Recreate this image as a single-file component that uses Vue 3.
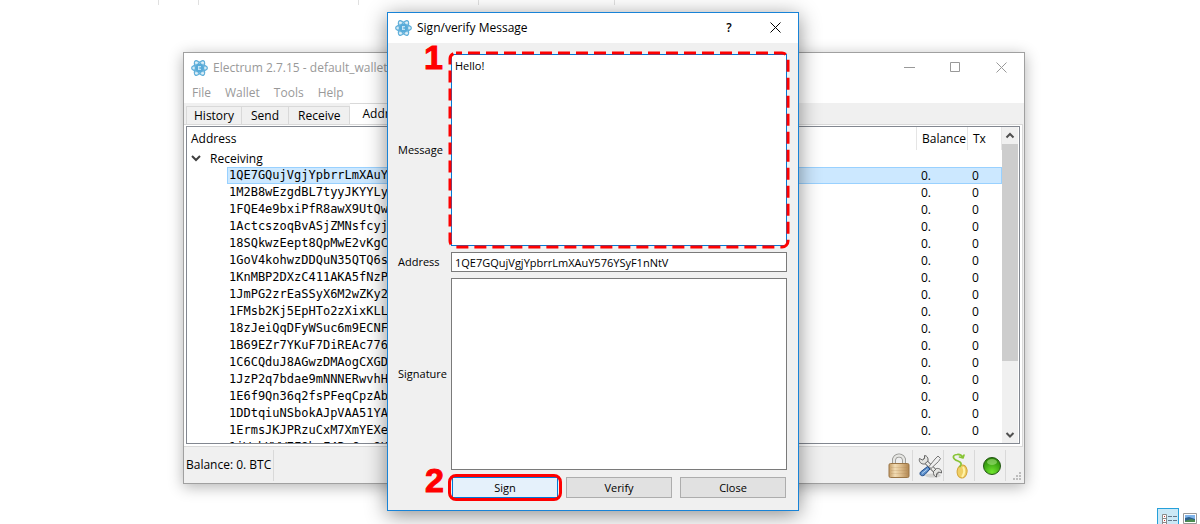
<script setup>
import { ref } from 'vue'

const menus = ['File', 'Wallet', 'Tools', 'Help']
const tabs = ['History', 'Send', 'Receive', 'Addresses']
const activeTab = ref('Addresses')
const addresses = [
  '1QE7GQujVgjYpbrrLmXAuY576YSyF1nNtV',
  '1M2B8wEzgdBL7tyyJKYYLyH',
  '1FQE4e9bxiPfR8awX9UtQwE',
  '1ActcszoqBvASjZMNsfcyjc',
  '18SQkwzEept8QpMwE2vKgCe',
  '1GoV4kohwzDDQuN35QTQ6sc',
  '1KnMBP2DXzC411AKA5fNzPx',
  '1JmPG2zrEaSSyX6M2wZKy2a',
  '1FMsb2Kj5EpHTo2zXixKLL9',
  '18zJeiQqDFyWSuc6m9ECNFF',
  '1B69EZr7YKuF7DiREAc776y',
  '1C6CQduJ8AGwzDMAogCXGDj',
  '1JzP2q7bdae9mNNNERwvhHg',
  '1E6f9Qn36q2fsPFeqCpzAbf',
  '1DDtqiuNSbokAJpVAA51YAE',
  '1ErmsJKJPRzuCxM7XmYEXeA',
  '1iWehKWW7F8hxF4PsCan9U'
]
const selected = ref(0)
const message = ref('Hello!')
const address = ref('1QE7GQujVgjYpbrrLmXAuY576YSyF1nNtV')
const signature = ref('')
const separators = [158, 198, 358, 478, 614]
</script>

<template>
  <div class="desktop">
    <i v-for="x in separators" :key="x" class="column-line" :style="{ left: x + 'px' }"></i>

    <div class="views">
      <button class="view on" aria-label="Details view">
        <svg width="20" height="15" viewBox="0 0 20 15">
          <path d="M4.500 5.500h4v12h-4zM4.500 9.500h4M4.500 13.500h4" fill="#fff" stroke="#8a8a8a" />
          <path d="M6 7h1v1H6zM6 11h1v1H6z" fill="#c33" />
          <path d="M10 7.500h4M15 7.500h4M10 11.500h4M15 11.500h4" stroke="#64788a" />
        </svg>
      </button>
      <button class="view" aria-label="Picture view">
        <svg width="14" height="11" viewBox="0 0 14 11">
          <path d="M.5.5h13v10H.5z" fill="#fff" stroke="#9a9a9a" />
          <path d="M2 2h10v4H2z" fill="#7fb4ea" />
          <path d="M2 5l4-1 6 2v3H2z" fill="#2d5f8c" />
          <path d="M2 8l6-2 4 1v2H2z" fill="#4c8b4f" />
        </svg>
      </button>
    </div>

    <section class="window main">
      <header class="titlebar">
        <svg class="logo" width="17" height="16" viewBox="0 0 17 16">
          <circle cx="8.500" cy="8" r="6.500" fill="#cfe8f5" />
          <g fill="none" stroke="#62b0da" stroke-width="1.400">
            <ellipse cx="8.500" cy="8" rx="7.800" ry="3.400" />
            <ellipse cx="8.500" cy="8" rx="8.200" ry="3.400" transform="rotate(60 8.500 8)" />
            <ellipse cx="8.500" cy="8" rx="8.200" ry="3.400" transform="rotate(120 8.500 8)" />
          </g>
          <circle cx="8.500" cy="8" r="4" fill="#58abd9" />
          <path d="M7.500 6.500h2.500M7.500 8h2M7.500 9.500h2.500M7.500 6v4" fill="none" stroke="#d8effa" stroke-width=".8" />
        </svg>
        <h1 class="title">Electrum 2.7.15 - default_wallet</h1>
        <div class="controls">
          <button aria-label="Minimize"><svg width="11" height="11"><path d="M0 5.500h11" /></svg></button>
          <button aria-label="Maximize"><svg width="11" height="11"><path d="M.5.5h9v9h-9z" /></svg></button>
          <button aria-label="Close window"><svg width="11" height="11"><path d="M.5.5l10 10M10.500.5l-10 10" /></svg></button>
        </div>
      </header>
      <nav class="menubar">
        <button v-for="m in menus" :key="m">{{ m }}</button>
      </nav>
      <div class="tabs" role="tablist">
        <button
          v-for="t in tabs"
          :key="t"
          role="tab"
          :class="{ active: t === activeTab }"
          :aria-selected="t === activeTab"
          @click="activeTab = t"
        >{{ t }}</button>
      </div>
      <div class="pane">
        <div class="tree">
          <div class="viewport">
            <table>
              <colgroup><col /><col class="c-balance" /><col class="c-tx" /></colgroup>
              <thead>
                <tr><th>Address</th><th>Balance</th><th>Tx</th></tr>
              </thead>
              <tbody>
                <tr class="group">
                  <td colspan="3">
                    <svg width="10" height="7" viewBox="0 0 10 7"><path d="M1 1l4 4 4-4" fill="none" stroke="#404040" stroke-width="2" /></svg>
                    Receiving
                  </td>
                </tr>
                <tr
                  v-for="(a, i) in addresses"
                  :key="a"
                  :class="{ selected: i === selected }"
                  @click="selected = i"
                >
                  <td class="addr"><div>{{ a }}</div></td>
                  <td class="num">0.</td>
                  <td class="num">0</td>
                </tr>
              </tbody>
            </table>
          </div>
          <div class="scrollbar">
            <svg width="16" height="17" viewBox="0 0 16 17"><path d="M4.500 10.500L8 7l3.500 3.500" /></svg>
            <div class="track"><div class="thumb"></div></div>
            <svg width="16" height="17" viewBox="0 0 16 17"><path d="M4.500 7L8 10.500 11.500 7" /></svg>
          </div>
        </div>
      </div>
      <footer class="status">
        <span class="balance">Balance: 0. BTC</span>
        <button class="cell" aria-label="Password">
          <svg width="24" height="28" viewBox="0 0 24 28">
            <defs>
              <linearGradient id="brass" x1="0" x2="1" y1="0" y2="0">
                <stop offset="0" stop-color="#c39a63" /><stop offset=".3" stop-color="#f2dcb4" />
                <stop offset=".6" stop-color="#dcbb8a" /><stop offset="1" stop-color="#b08550" />
              </linearGradient>
            </defs>
            <path d="M7 13V8.500a5 5 0 0 1 10 0V13" fill="none" stroke="#8d8d8a" stroke-width="4" />
            <path d="M7 13V8.500a5 5 0 0 1 10 0V13" fill="none" stroke="#e6e6e3" stroke-width="2.400" />
            <rect x="2" y="11.500" width="20" height="14" rx="1.500" fill="url(#brass)" stroke="#9a7546" />
            <path d="M4 15.500h16M4 18.500h16M4 21.500h16" stroke="#a98353" opacity=".2" />
          </svg>
        </button>
        <button class="cell" aria-label="Preferences">
          <svg width="24" height="24" viewBox="0 0 24 24">
            <ellipse cx="15" cy="21.500" rx="8" ry="2" fill="#d2d2d0" />
            <g fill="none" stroke-linecap="round">
              <path d="M6.500 6.500l12 12" stroke="#666" stroke-width="4.500" />
              <path d="M6.500 6.500l12 12" stroke="#e9e9e6" stroke-width="2.500" />
            </g>
            <path d="M6.500 1.500v3l-2 1.500-3-1.500c-1 3 1.500 6 5 5.500l3.500-3C10.500 4 9 1.500 6.500 1.500zM18.500 23v-3l2-2 3 1c.5-3-2-5-5-4.500l-3 3c-.5 3 1 5 3 5.500z" fill="#e4e4e1" stroke="#666" />
            <path d="M20 2l2.500 2.500-2 3-7.500 7-2-2 6-7.500z" fill="#eee" stroke="#777" />
            <path d="M9.500 12.500l2.500 2.500-5 5.500c-2 2.500-6.500 1-4.500-2.500z" fill="#5b8ec9" stroke="#204a87" />
            <path d="M9.500 15l-5.500 4.500" stroke="#b5d2f2" />
          </svg>
        </button>
        <button class="cell" aria-label="Seed">
          <svg width="20" height="26" viewBox="0 0 20 26">
            <ellipse cx="11" cy="18.500" rx="5" ry="6.500" fill="#efcf65" stroke="#d3a437" transform="rotate(8 11 19)" />
            <path d="M12 14c2 3 1 7-1 10" fill="none" stroke="#fff2a7" stroke-width="2" />
            <path d="M9 13.500C11 11 10.500 9.500 7 8 1 6 1 2 6 1.500c3-.4 5 1 6 3M8.500 4l3.500 1 1-3" fill="none" stroke="#87c435" stroke-width="1.700" stroke-linecap="round" stroke-linejoin="round" />
          </svg>
        </button>
        <button class="cell" aria-label="Network">
          <svg width="20" height="20" viewBox="0 0 20 20">
            <defs>
              <radialGradient id="led" cx=".5" cy=".85" r=".85">
                <stop offset="0" stop-color="#70e52e" /><stop offset=".6" stop-color="#3fa914" /><stop offset="1" stop-color="#2a8207" />
              </radialGradient>
            </defs>
            <circle cx="10" cy="10" r="8.500" fill="url(#led)" stroke="#245715" />
            <ellipse cx="10" cy="6" rx="5" ry="3" fill="#b5ee91" opacity=".5" />
          </svg>
        </button>
        <svg class="grip" width="9" height="9" viewBox="0 0 9 9"><path d="M6 0h2v2H6zM3 3h2v2H3zM6 3h2v2H6zM0 6h2v2H0zM3 6h2v2H3zM6 6h2v2H6z" fill="#bdbdbd" /></svg>
      </footer>
    </section>

    <section class="window dialog" role="dialog" aria-labelledby="dialog-title">
      <header class="titlebar">
        <svg class="logo" width="17" height="16" viewBox="0 0 17 16">
          <circle cx="8.500" cy="8" r="6.500" fill="#cfe8f5" />
          <g fill="none" stroke="#62b0da" stroke-width="1.400">
            <ellipse cx="8.500" cy="8" rx="7.800" ry="3.400" />
            <ellipse cx="8.500" cy="8" rx="8.200" ry="3.400" transform="rotate(60 8.500 8)" />
            <ellipse cx="8.500" cy="8" rx="8.200" ry="3.400" transform="rotate(120 8.500 8)" />
          </g>
          <circle cx="8.500" cy="8" r="4" fill="#58abd9" />
          <path d="M7.500 6.500h2.500M7.500 8h2M7.500 9.500h2.500M7.500 6v4" fill="none" stroke="#d8effa" stroke-width=".8" />
        </svg>
        <h2 id="dialog-title" class="title">Sign/verify Message</h2>
        <div class="controls">
          <button class="help" aria-label="What's this">?</button>
          <button aria-label="Close dialog"><svg width="11" height="11"><path d="M.5.5l10 10M10.500.5l-10 10" /></svg></button>
        </div>
      </header>
      <form class="form" @submit.prevent>
        <label for="message">Message</label>
        <div class="field">
          <textarea id="message" v-model="message" class="focused" spellcheck="false"></textarea>
          <svg class="dashes"><rect width="100%" height="100%" rx="6" /></svg>
          <b class="step">1</b>
        </div>
        <label for="address">Address</label>
        <input id="address" v-model="address" type="text" spellcheck="false" />
        <label for="signature">Signature</label>
        <textarea id="signature" v-model="signature" spellcheck="false"></textarea>
        <div class="actions">
          <div class="action">
            <button class="primary">Sign</button>
            <i class="ring"></i>
            <b class="step">2</b>
          </div>
          <div class="action"><button>Verify</button></div>
          <div class="action"><button>Close</button></div>
        </div>
      </form>
    </section>
  </div>
</template>

<style>
body { background: #fff; overflow: hidden; }
</style>

<style scoped>
.desktop {
  position: relative;
  height: 100vh;
  overflow: hidden;
  background: #fff;
  color: #000;
  font: 12px/16px "Open Sans", "Noto Sans", sans-serif;
}
.desktop *, .desktop *::before { box-sizing: border-box; }
button { font: inherit; color: inherit; background: none; border: 0; padding: 0; margin: 0; }
svg { display: block; flex: none; }
.column-line { position: absolute; top: 0; width: 1px; height: 5px; background: #e0e0e0; }
.views { position: absolute; right: 3px; bottom: 0; display: flex; gap: 4px; align-items: flex-end; height: 16px; }
.view { width: 14px; height: 11px; }
.view.on { width: 22px; height: 16px; border: 1px solid #26a0da; border-bottom: 0; background: #cbe8f6; overflow: hidden; }

.window { position: absolute; display: flex; flex-direction: column; }
.main {
  inset: 52px 175px 40px 183px;
  border: 1px solid #a0a0a0;
  background: #f0f0f0;
  box-shadow: 0 3px 14px rgba(0, 0, 0, 0.3);
}
.dialog {
  inset: 12px 401px 13px 387px;
  border: 1px solid #1883d7;
  background: #f0f0f0;
  box-shadow: 0 4px 20px rgba(0, 0, 0, 0.45);
}
.titlebar { display: flex; align-items: center; height: 30px; padding: 0 0 1px 7px; background: #fff; }
.title { margin: 0 0 0 5px; font-size: 12px; font-weight: 400; white-space: nowrap; }
.main .title, .menubar { color: #999; }
.controls { display: flex; margin-left: auto; }
.controls button { display: grid; place-items: center; width: 46px; height: 29px; }
.controls path { fill: none; stroke: #000; }
.main .controls path { stroke: #999; }
.controls .help { font-weight: 600; }
.menubar { display: flex; gap: 14px; height: 20px; padding-left: 8px; background: #fff; }

.tabs { display: flex; align-items: flex-end; height: 21px; padding-left: 2px; }
.tabs button {
  height: 18px;
  padding: 0 8px;
  border: 1px solid #d9d9d9;
  border-width: 1px 1px 0 0;
  line-height: 18px;
}
.tabs button:first-child { border-left-width: 1px; padding: 0 7px; }
.tabs button:nth-child(n + 2) { padding: 0 9px; }
.tabs .active:last-child { height: 21px; padding: 0 12px; background: #fff; }
.pane {
  flex: 1;
  display: flex;
  min-height: 0;
  padding: 1px 2px 2px 1px;
  margin-right: 1px;
  border: 1px solid #d9d9d9;
  border-left: 0;
  background: #fff;
}
.tree { flex: 1; display: flex; min-width: 0; margin-left: 1px; border: 1px solid #828790; }
.viewport { flex: 1; overflow: hidden; }
table { width: 100%; table-layout: fixed; border-collapse: separate; border-spacing: 0; }
.c-balance { width: 51px; }
.c-tx { width: 34px; }
th { height: 23px; padding: 0 0 0 5px; border-right: 1px solid #e5e5e5; font-weight: 400; text-align: left; }
th:first-child { padding-left: 4px; }
td { height: 17px; padding: 0; line-height: 15px; white-space: nowrap; }
.group svg { display: inline-block; margin: 0 6px 2px 4px; vertical-align: middle; }
.addr { padding-left: 40px; font-family: "DejaVu Sans Mono", monospace; }
.addr div { height: 17px; padding: 0 1px; border: 1px solid transparent; border-right: 0; line-height: 15px; }
.num { padding-left: 4px; border: 1px solid transparent; border-width: 1px 0; }
.selected .addr div, .selected .num { border-color: #99d1ff; background: #cce8ff; }
.selected .num:last-child { border-right: 1px solid #99d1ff; }
.scrollbar { display: flex; flex-direction: column; width: 17px; background: #f0f0f0; border-right: 1px solid #fff; }
.scrollbar path { fill: none; stroke: #505050; stroke-width: 2; }
.track { flex: 1; }
.thumb { height: 77%; background: #cdcdcd; }

.status { display: flex; align-items: center; height: 36px; padding: 0 2px; }
.balance { display: flex; align-items: center; height: 31px; margin-right: auto; padding-right: 2px; border-right: 1px solid #d9d9d9; }
.cell { display: grid; place-items: center; width: 31px; height: 31px; padding: 2px 0 0 3px; border-right: 1px solid #d9d9d9; }
.grip { align-self: flex-end; margin: 0 0 2px 7px; }

.form {
  flex: 1;
  display: grid;
  grid-template: 1fr 20px 1fr 22px / 47px 1fr;
  gap: 6px;
  padding: 11px 11px 12px 10px;
  align-items: center;
  font: 11px/16px "Open Sans", "Noto Sans", sans-serif;
}
.field { position: relative; display: flex; height: 100%; }
textarea, input {
  width: 100%;
  height: 100%;
  margin: 0;
  padding: 3px;
  border: 1px solid #7a7a7a;
  border-radius: 0;
  outline: 0;
  background: #fff;
  color: #000;
  font: inherit;
  resize: none;
  overflow: hidden;
}
input { padding: 0 3px; }
.focused { border-color: #0078d7; }
.dashes { position: absolute; top: -1px; left: -1px; width: calc(100% + 2px); height: calc(100% + 2px); overflow: visible; pointer-events: none; }
.dashes rect { fill: none; stroke: #f00; stroke-width: 3; stroke-dasharray: 12 6; stroke-dashoffset: 6; }
.actions { grid-column: 2; display: flex; gap: 8px; height: 22px; padding: 1px 1px 0; }
.action { position: relative; flex: 1; display: flex; }
.action button { width: 100%; border: 1px solid #adadad; background: #e1e1e1; }
.action .primary { border-color: #0078d7; background: #e5f1fb; }
.ring { position: absolute; inset: -3px -4px; border: 3px solid #f00; border-radius: 8px; }
.step { position: absolute; right: 100%; top: -14px; margin-right: 8px; color: #f00; font: bold 34px/34px "Liberation Sans", sans-serif; -webkit-text-stroke: 1px #f00; }
</style>
